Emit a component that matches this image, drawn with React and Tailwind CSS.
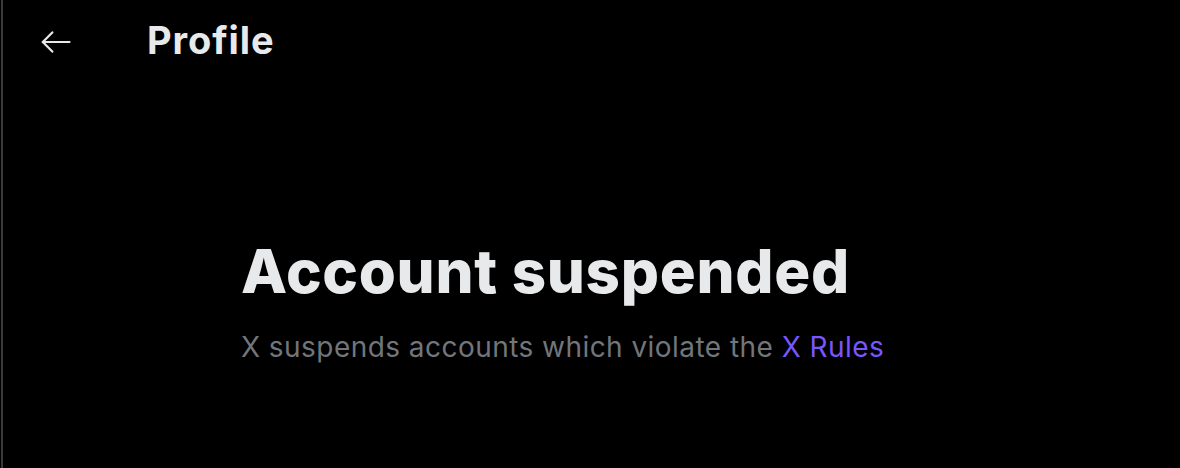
export default function App() {
  return (
    <div
      className="w-[1180px] h-[468px] bg-black flex overflow-hidden"
      style={{ fontFamily: "Inter, 'Liberation Sans', sans-serif" }}
    >
      <div className="w-px bg-black" />
      <div className="w-[2px] bg-[#3a3a3d]" />
      <div className="flex-1 flex flex-col">
        <div className="h-[80px] flex items-center">
          <div className="ml-[38px] mt-[3px] w-[30px] h-[22px] flex">
            <svg width="30" height="22" viewBox="0 0 30 22" fill="none" stroke="#e7e9ea" strokeWidth="2.2" strokeLinecap="round" strokeLinejoin="round">
              <path d="M1.8 11H28.5" />
              <path d="M11.3 1.4L1.8 11l9.5 9.6" />
            </svg>
          </div>
          <h1 className="ml-[76px] text-[38px] leading-[48px] font-bold text-[#e7e9ea] tracking-[0.9px]">Profile</h1>
        </div>
        <div className="pl-[238px] pt-[155px]">
          <h2 className="text-[60px] leading-[72px] font-extrabold text-[#e7e9ea] tracking-[0.7px]">
            Account suspended
          </h2>
          <p className="mt-[22px] text-[28px] leading-[36px] text-[#71767b] tracking-[0.45px]">
            X suspends accounts which violate the <span className="text-[#7856ff]">X Rules</span>
          </p>
        </div>
      </div>
    </div>
  );
}
